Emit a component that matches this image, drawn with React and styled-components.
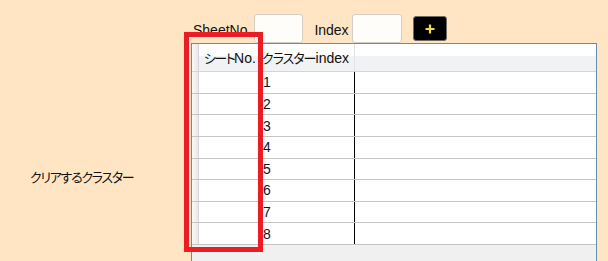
import React from "react";
import styled, { createGlobalStyle } from "styled-components";

const Global = createGlobalStyle`
  html, body { margin: 0; padding: 0; overflow: hidden; }
  body {
    background: #ffe5c3;
    font-family: "Liberation Sans", "Noto Sans CJK JP", sans-serif;
    font-size: 14px;
    color: #111;
  }
`;

const Page = styled.div`
  position: relative;
  width: 608px;
  height: 261px;
  display: grid;
  grid-template-columns: 191px 406px;
  grid-template-rows: 43px 270px;
  background: #ffe5c3;
`;

const LabelCell = styled.div`
  grid-column: 1;
  grid-row: 2;
  display: flex;
  align-items: center;
  padding: 0 0 4px 30px;
`;

const Kana = styled.span`
  font-family: "Noto Sans CJK JP", sans-serif;
  font-size: 13px;
  font-feature-settings: "palt";
  letter-spacing: ${(p) => p.$ls || "-1.3px"};
  white-space: nowrap;
`;

const Toolbar = styled.div`
  grid-column: 2;
  grid-row: 1;
  display: flex;
  align-items: center;
  padding: 14px 0 0 2px;
  height: 43px;
  box-sizing: border-box;
`;

const FieldLabel = styled.span`
  margin-left: ${(p) => p.$ml || 0}px;
  padding-top: 3px;
  white-space: nowrap;
`;

const Field = styled.input`
  box-sizing: border-box;
  width: ${(p) => p.$w}px;
  height: 29px;
  margin-left: 3px;
  border: 1px solid #d5cec5;
  border-radius: 3px;
  background: #fffdf9;
  outline: none;
  padding: 0 3px;
`;

const AddButton = styled.button`
  box-sizing: border-box;
  width: 34px;
  height: 25px;
  margin-left: 11px;
  background: #000;
  border: 1px solid #6e6a62;
  border-radius: 3px;
  display: flex;
  align-items: center;
  justify-content: center;
  padding: 0;
`;

const Table = styled.div`
  grid-column: 2;
  grid-row: 2;
  box-sizing: border-box;
  border: 1px solid #688caf;
  background: #f0f0f0;
  display: flex;
  flex-direction: column;
  overflow: hidden;
`;

const HeaderRow = styled.div`
  display: flex;
  height: 28px;
  box-sizing: border-box;
  border-bottom: 1px solid #d5d5d5;
  background: linear-gradient(to bottom, #ffffff 0%, #ffffff 44%, #f1f2f4 44%, #f1f2f4 100%);
`;

const HeaderCell = styled.div`
  box-sizing: border-box;
  width: ${(p) => (p.$w ? `${p.$w}px` : "auto")};
  flex: ${(p) => (p.$w ? "none" : "1")};
  display: flex;
  align-items: center;
  padding-left: ${(p) => p.$pl || 0}px;
  border-right: ${(p) => (p.$w ? "1px solid #e2e3e6" : "none")};
  white-space: nowrap;
  overflow: hidden;
`;

const Row = styled.div`
  display: flex;
  height: 21.625px;
  box-sizing: border-box;
  border-bottom: 1px solid #c4c4c4;
  background: #fff;
`;

const Gutter = styled.div`
  width: 7px;
  flex: none;
  box-sizing: border-box;
  border-right: 1px solid #d6d6d6;
  background: linear-gradient(to right, #f9f9f9, #e9e9e9);
`;

const Cell = styled.div`
  box-sizing: border-box;
  width: ${(p) => (p.$w ? `${p.$w}px` : "auto")};
  flex: ${(p) => (p.$w ? "none" : "1")};
  border-right: ${(p) => (p.$w ? "1px solid #000" : "none")};
  padding-left: 3px;
  display: flex;
  align-items: center;
  color: #11122e;
`;

const Highlight = styled.div`
  position: absolute;
  left: 184px;
  top: 32px;
  width: 79px;
  height: 220px;
  box-sizing: border-box;
  border: 5px solid #ec1c24;
  pointer-events: none;
`;

const rows = [1, 2, 3, 4, 5, 6, 7, 8];

export default function App() {
  return (
    <>
      <Global />
      <Page>
        <LabelCell>
          <Kana>クリアするクラスター</Kana>
        </LabelCell>
        <Toolbar>
          <FieldLabel>SheetNo.</FieldLabel>
          <Field $w={49} />
          <FieldLabel $ml={11}>Index</FieldLabel>
          <Field $w={50} />
          <AddButton>
            <svg width="10" height="10" viewBox="0 0 10 10">
              <path d="M5 0.5V9.5M0.5 5H9.5" stroke="#f7d54a" strokeWidth="2.2" />
            </svg>
          </AddButton>
        </Toolbar>
        <Table>
          <HeaderRow>
            <Gutter />
            <HeaderCell $w={61} $pl={5}>
              <Kana $ls="-1.6px">シート</Kana>No.
            </HeaderCell>
            <HeaderCell $w={95} $pl={2}>
              <Kana $ls="-1px">クラスター</Kana>index
            </HeaderCell>
            <HeaderCell />
          </HeaderRow>
          {rows.map((n) => (
            <Row key={n}>
              <Gutter />
              <Cell $w={61} />
              <Cell $w={95}>{n}</Cell>
              <Cell />
            </Row>
          ))}
        </Table>
        <Highlight />
      </Page>
    </>
  );
}
